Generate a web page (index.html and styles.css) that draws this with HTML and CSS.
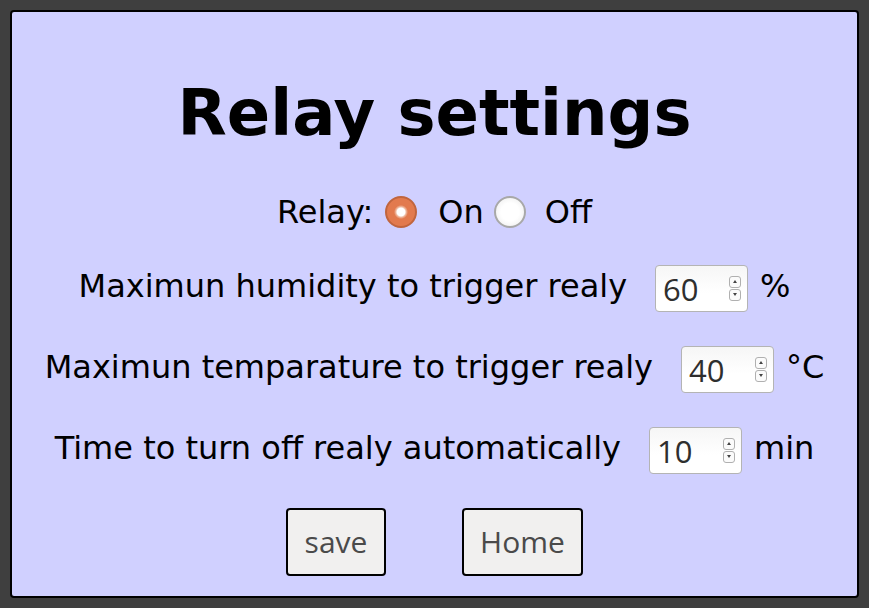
FILE: index.html
```html
<!DOCTYPE html>
<html lang="en">
<head>
<meta charset="utf-8">
<title>Relay settings</title>
<link rel="stylesheet" href="styles.css">
</head>
<body>
<main class="panel">
  <h1 class="title">Relay settings</h1>
  <div class="row relay-row">
    <span class="label">Relay:</span>
    <span class="radio radio-on"></span>
    <span class="opt opt-on">On</span>
    <span class="radio radio-off"></span>
    <span class="opt opt-off">Off</span>
  </div>
  <div class="row field-row">
    <span class="label">Maximun humidity to trigger realy</span>
    <span class="num"><span class="num-val">60</span><span class="spin"><span class="spin-up"></span><span class="spin-down"></span></span></span>
    <span class="unit">%</span>
  </div>
  <div class="row field-row">
    <span class="label">Maximun temparature to trigger realy</span>
    <span class="num"><span class="num-val">40</span><span class="spin"><span class="spin-up"></span><span class="spin-down"></span></span></span>
    <span class="unit">°C</span>
  </div>
  <div class="row field-row">
    <span class="label">Time to turn off realy automatically</span>
    <span class="num"><span class="num-val">10</span><span class="spin"><span class="spin-up"></span><span class="spin-down"></span></span></span>
    <span class="unit unit-min">min</span>
  </div>
  <div class="row btn-row">
    <button class="btn btn-save">save</button>
    <button class="btn btn-home">Home</button>
  </div>
</main>
</body>
</html>
```

FILE: styles.css
```css
html, body {
  margin: 0;
  padding: 0;
}
body {
  background: #3f3f3f;
  padding: 10px;
  font-family: "DejaVu Sans", sans-serif;
  font-size: 32px;
  color: #000;
  box-sizing: border-box;
  height: 608px;
}
.panel {
  box-sizing: border-box;
  width: 849px;
  height: 588px;
  background: #d0d0ff;
  border: 2px solid #000;
  border-radius: 4px;
  padding-top: 63px;
  display: flex;
  flex-direction: column;
  align-items: center;
}
.title {
  margin: 0;
  font-size: 64px;
  line-height: 76px;
  font-weight: bold;
}
.row {
  display: flex;
  align-items: center;
  line-height: 40px;
}
.relay-row {
  margin-top: 41px;
  height: 40px;
}
.radio {
  box-sizing: border-box;
  width: 32px;
  height: 32px;
  border-radius: 50%;
  display: inline-block;
}
.radio-on {
  margin-left: 12px;
  background: radial-gradient(circle, #ffffff 0 4px, #f0c0a8 5px, #e27a4e 7px);
  border: 2px solid #c0653e;
}
.radio-off {
  margin-left: 10px;
  background: radial-gradient(circle, #ffffff 0 9px, #f5f5f5 14px);
  border: 2px solid #a8a8a8;
}
.opt-on {
  margin-left: 21px;
}
.opt-off {
  margin-left: 19px;
}
.field-row {
  height: 47px;
}
.field-row .label,
.field-row .unit {
  margin-bottom: 6px;
}
.relay-row + .field-row {
  margin-top: 33px;
}
.field-row + .field-row {
  margin-top: 34px;
}
.num {
  box-sizing: border-box;
  margin-left: 28px;
  width: 93px;
  height: 47px;
  border: 1px solid #b4b4b4;
  border-radius: 4px;
  background: linear-gradient(#f6f6f6, #ffffff 60%);
  display: flex;
  align-items: center;
  padding-left: 7px;
  padding-right: 6px;
}
.num-val {
  flex: 1;
  font-family: "Open Sans", sans-serif;
  font-size: 31px;
  color: #2e2e2e;
  line-height: 40px;
}
.spin {
  display: flex;
  flex-direction: column;
  gap: 1px;
  width: 12px;
}
.spin-up, .spin-down {
  box-sizing: border-box;
  height: 12px;
  border: 1px solid #b0b0b0;
  border-radius: 3px;
  background: #fbfbfb;
  position: relative;
}
.spin-up::after, .spin-down::after {
  content: "";
  position: absolute;
  left: 3px;
  top: 3px;
  width: 0;
  height: 0;
  border-left: 2px solid transparent;
  border-right: 2px solid transparent;
}
.spin-up::after {
  border-bottom: 3px solid #444;
}
.spin-down::after {
  border-top: 3px solid #444;
}
.unit {
  margin-left: 12px;
}
.unit-min {
  margin-left: 12px;
}
.btn-row {
  margin-top: 34px;
  gap: 76px;
}
.btn {
  box-sizing: border-box;
  height: 68px;
  padding: 0 16px;
  border: 2px solid #000;
  border-radius: 4px;
  background: #f1f0ef;
  color: #4a4a4a;
  font-family: "Open Sans", sans-serif;
  font-size: 30px;
  line-height: 40px;
}
.btn-save {
  width: 100px;
}
.btn-home {
  width: 121px;
}
```
